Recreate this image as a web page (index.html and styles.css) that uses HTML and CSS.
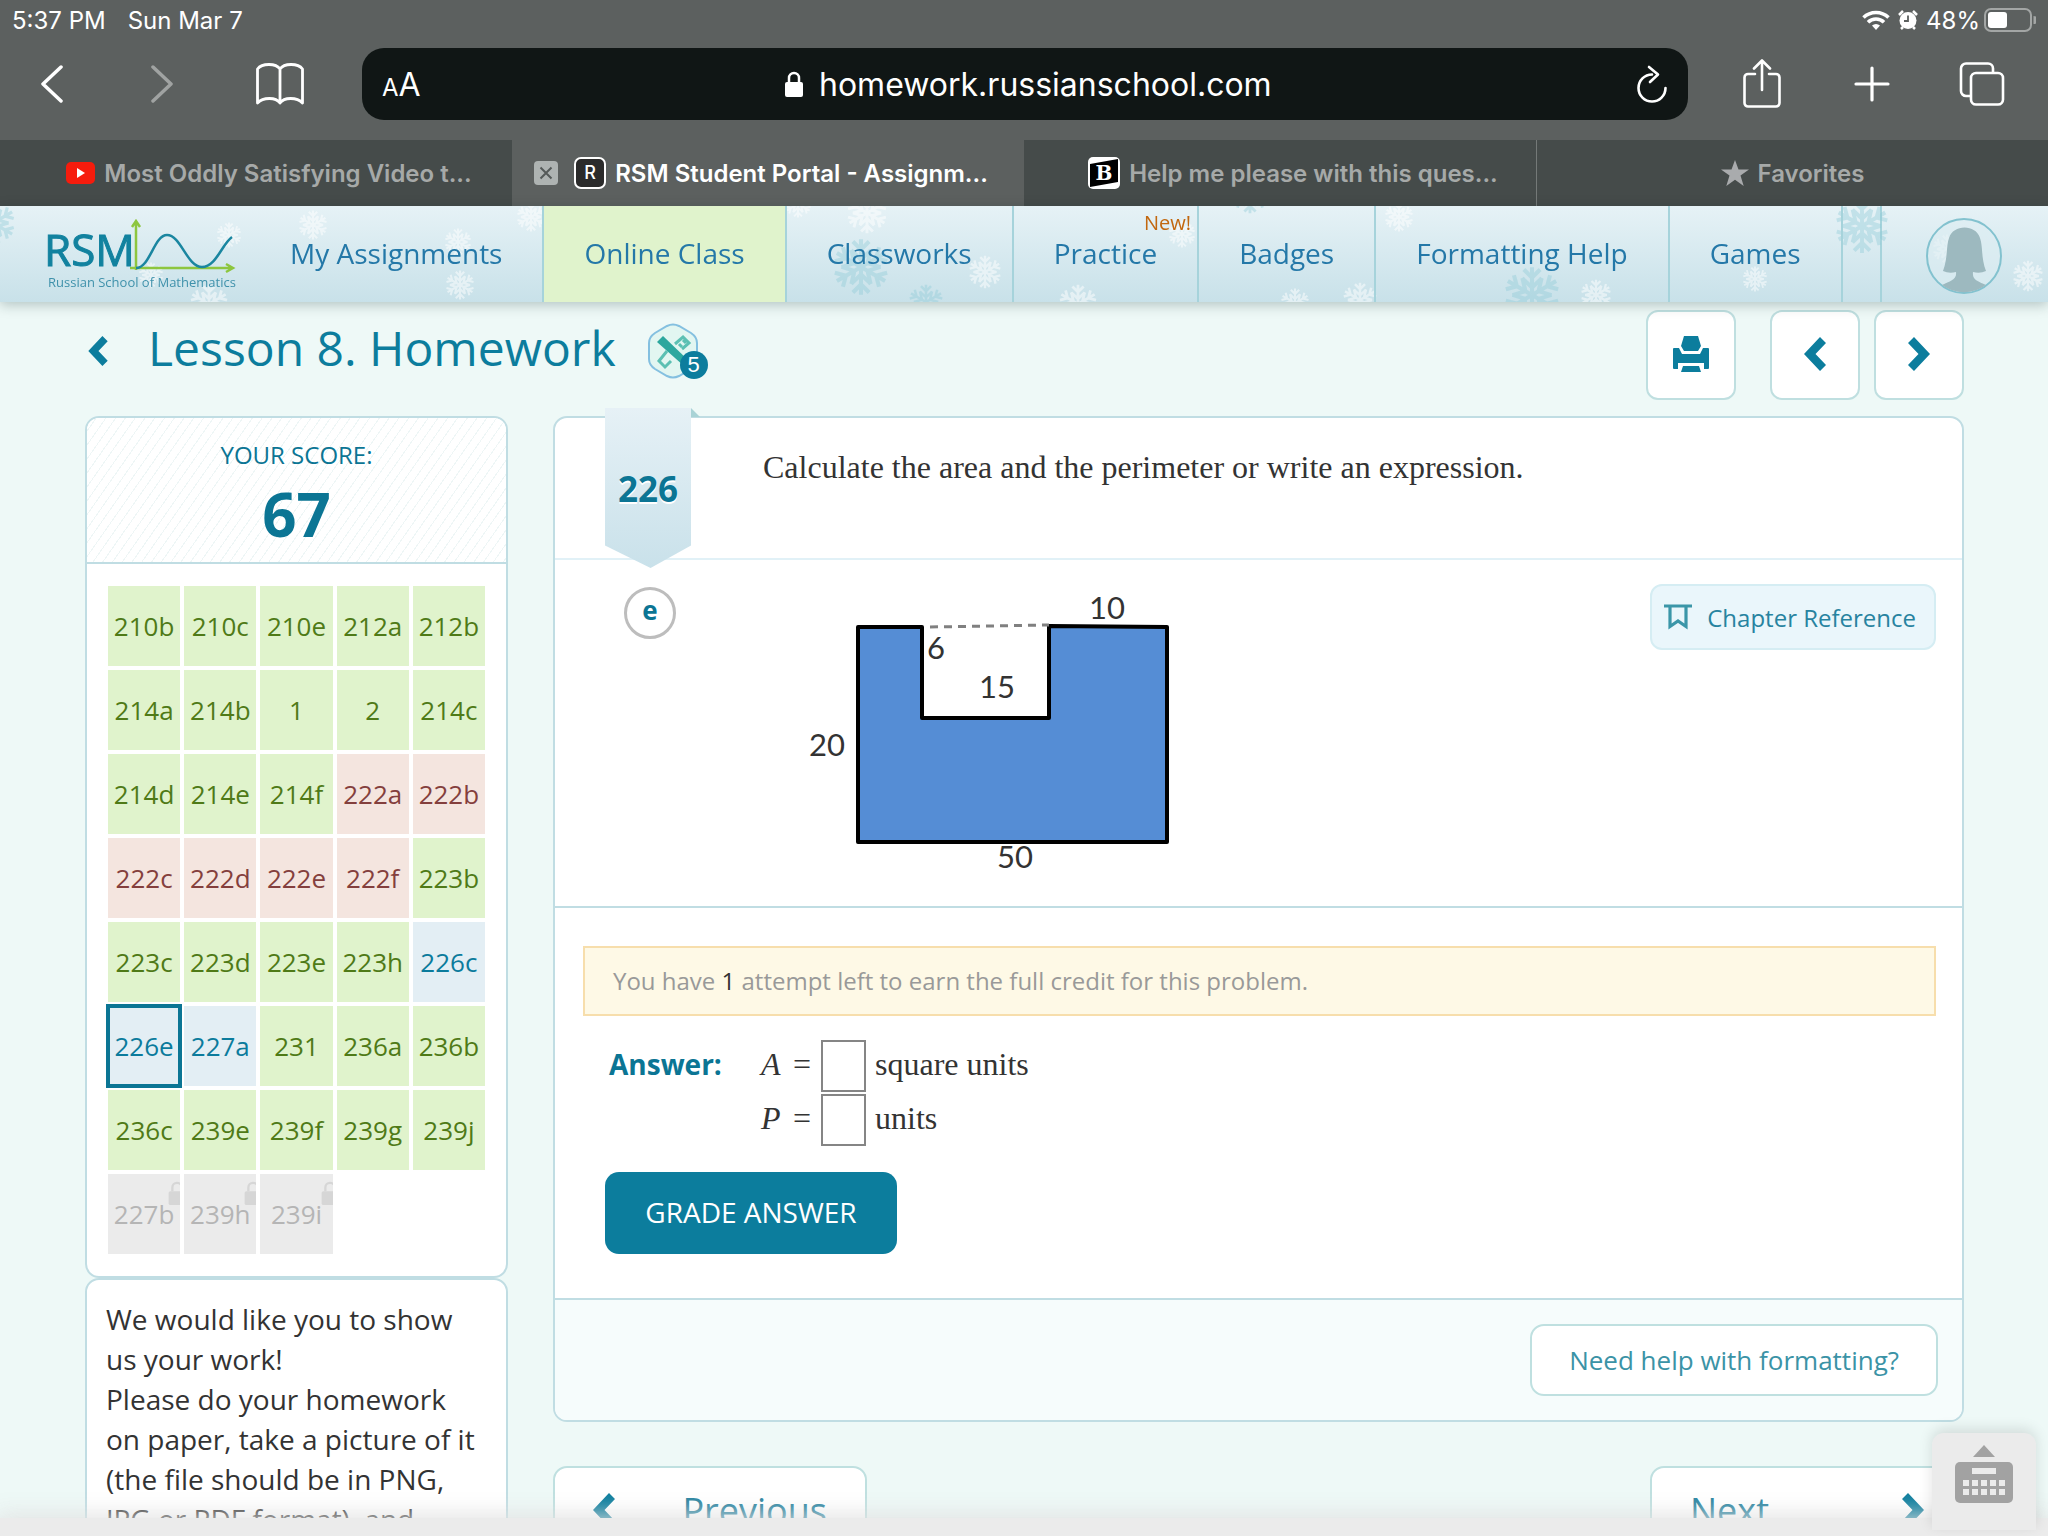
FILE: index.html
```html
<!DOCTYPE html>
<html lang="en">
<head>
    <meta charset="UTF-8">
    <meta name="viewport" content="width=device-width, initial-scale=1.0">

    <title>RSM Student Portal - Assignments</title>

<link rel="stylesheet" href="styles.css">

</head>
<body>
    <!-- shared shapes -->
    <svg class="defs" width="0" height="0" aria-hidden="true">
        <symbol id="flake" viewBox="-50 -50 100 100">
            <g id="arm" fill="none" stroke="currentColor" stroke-width="7">
                <path d="M0 0V-48M-14 -44L0 -30L14 -44M-17 -29L0 -13L17 -29"/>
            </g>
            <use href="#arm" transform="rotate(60)"/>
            <use href="#arm" transform="rotate(120)"/>
            <use href="#arm" transform="rotate(180)"/>
            <use href="#arm" transform="rotate(240)"/>
            <use href="#arm" transform="rotate(300)"/>
        </symbol>
        <symbol id="chev-left" viewBox="0 0 22 34">
            <path d="M16 0L22 6L11.500 17L22 28L16 34L0 17Z" fill="currentColor"/>
        </symbol>
        <symbol id="chev-right" viewBox="0 0 22 34">
            <path d="M6 0L0 6L10.500 17L0 28L6 34L22 17Z" fill="currentColor"/>
        </symbol>
        <symbol id="lock" viewBox="0 0 18 28">
            <path d="M4 12V8a5 5 0 0 1 10 0v4" fill="none" stroke="currentColor" stroke-width="2.500"/>
            <rect y="12" width="18" height="15" rx="2" fill="currentColor"/>
        </symbol>
    </svg>

    <div class="browser">
        <div class="status">
            <span>5:37 PM</span>
            <span>Sun Mar 7</span>
            <div class="status-right">
                <svg width="28" height="20" viewBox="0 0 28 20">
                    <g fill="none" stroke="#fff" stroke-width="3.600">
                        <path d="M1.500 7.500a18 18 0 0 1 25 0"/>
                        <path d="M6 12.300a11.500 11.500 0 0 1 16 0"/>
                    </g>
                    <path d="M14 20l-4-4.500a6 6 0 0 1 8 0z" fill="#fff"/>
                </svg>
                <svg width="20" height="20" viewBox="0 0 20 20">
                    <circle cx="10" cy="10.500" r="8.500" fill="#fff"/>
                    <path d="M1 5l4-4M19 5l-4-4M3 19l2-2M17 19l-2-2" stroke="#fff" stroke-width="2.500"/>
                    <path d="M10 5.500v5.500H6" fill="none" stroke="#5c605f" stroke-width="1.800"/>
                </svg>
                <span>48%</span>
                <svg class="battery" width="52" height="24" viewBox="0 0 52 24">
                    <rect x="1" y="1" width="46" height="22" rx="6" fill="none" stroke="#a3a6a5" stroke-width="2"/>
                    <rect x="4" y="4" width="19" height="16" rx="3" fill="#fff"/>
                    <path d="M49.500 8a4 4 0 0 1 0 8z" fill="#a3a6a5"/>
                </svg>
            </div>
        </div>

        <div class="toolbar">
            <button class="tool" aria-label="Back">
                <svg width="24" height="38" viewBox="0 0 24 38"><path d="M21 2L3 19L21 36" fill="none" stroke="#fff" stroke-width="3.500" stroke-linecap="round" stroke-linejoin="round"/></svg>
            </button>
            <button class="tool" aria-label="Forward">
                <svg width="24" height="38" viewBox="0 0 24 38"><path d="M3 2L21 19L3 36" fill="none" stroke="#a0a3a2" stroke-width="3.500" stroke-linecap="round" stroke-linejoin="round"/></svg>
            </button>
            <button class="tool wide" aria-label="Bookmarks">
                <svg width="48" height="42" viewBox="0 0 48 42"><path d="M24 6C20 0 6 0 1.500 6V40C7 34 20 34 24 40C28 34 41 34 46.500 40V6C42 0 28 0 24 6V40" fill="none" stroke="#fff" stroke-width="2.800" stroke-linejoin="round"/></svg>
            </button>
            <div class="address">
                <span class="reader"><small>A</small>A</span>
                <span class="url">
                    <svg width="18" height="28"><use href="#lock"/></svg>
                    homework.russianschool.com
                </span>
                <button class="reload" aria-label="Reload">
                    <svg width="32" height="38" viewBox="0 0 32 38"><path d="M16 9.500A13.500 13.500 0 1 0 29.500 23M13 2L22 9.500L14 17" fill="none" stroke="#fff" stroke-width="2.600" stroke-linecap="round" stroke-linejoin="round"/></svg>
                </button>
            </div>
            <button class="tool" aria-label="Share">
                <svg width="38" height="50" viewBox="0 0 38 50"><path d="M12 15H5a3.500 3.500 0 0 0-3.500 3.500V44A3.500 3.500 0 0 0 5 47.500H33a3.500 3.500 0 0 0 3.500-3.500V18.500A3.500 3.500 0 0 0 33 15H26M19 31V2M11 9.500L19 1.500L27 9.500" fill="none" stroke="#fff" stroke-width="2.600" stroke-linecap="round" stroke-linejoin="round"/></svg>
            </button>
            <button class="tool" aria-label="New tab">
                <svg width="36" height="36" viewBox="0 0 36 36"><path d="M18 2V34M2 18H34" stroke="#fff" stroke-width="3.200" stroke-linecap="round"/></svg>
            </button>
            <button class="tool" aria-label="All tabs">
                <svg width="46" height="44" viewBox="0 0 46 44"><rect x="12" y="11" width="32" height="31.500" rx="5" fill="none" stroke="#fff" stroke-width="2.600"/><path d="M12 34H7a5 5 0 0 1-5-5V6.500a5 5 0 0 1 5-5H29a5 5 0 0 1 5 5V11" fill="none" stroke="#fff" stroke-width="2.600"/></svg>
            </button>
        </div>

        <div class="tabs">
            <div class="tab">
                <span class="close"></span>
                <span class="label">
                    <svg width="29" height="22" viewBox="0 0 29 22"><rect width="29" height="22" rx="5" fill="#f61c0d"/><path d="M11 6L19 11L11 16Z" fill="#fff"/></svg>
                    Most Oddly Satisfying Video t...
                </span>
            </div>
            <div class="tab active">
                <button class="close" aria-label="Close tab">
                    <svg width="24" height="24" viewBox="0 0 24 24"><rect width="24" height="24" rx="4" fill="#aeb3b2"/><path d="M6.500 6.500L17.500 17.500M17.500 6.500L6.500 17.500" stroke="#555a59" stroke-width="2"/></svg>
                </button>
                <span class="label"><b class="fav">R</b>RSM Student Portal - Assignm...</span>
            </div>
            <div class="tab">
                <span class="close"></span>
                <span class="label">
                    <svg width="32" height="32" viewBox="0 0 32 32"><rect width="32" height="32" rx="5" fill="#fff"/><path d="M2 7L30 2V25L2 30Z" fill="#000"/><text x="16" y="23" class="brainly">B</text></svg>
                    Help me please with this ques...
                </span>
            </div>
            <div class="tab last">
                <span class="label">
                    <svg width="28" height="26" viewBox="0 0 28 26"><path d="M14 0L17.500 9.500H28L19.500 15.500L22.700 26L14 19.700L5.300 26L8.500 15.500L0 9.500H10.500Z" fill="#a9abad"/></svg>
                    Favorites
                </span>
            </div>
        </div>
    </div>

    <nav class="site-nav">
        <svg class="snow" aria-hidden="true">
            <g color="#fff" opacity="0.500">
                <use href="#flake" x="298" y="4" width="30" height="30"/>
                <use href="#flake" x="216" y="16" width="26" height="26"/>
                <use href="#flake" x="444" y="22" width="28" height="28"/>
                <use href="#flake" x="445" y="64" width="30" height="30"/>
                <use href="#flake" x="516" y="-4" width="30" height="30"/>
                <use href="#flake" x="189" y="78" width="40" height="40"/>
                <use href="#flake" x="138" y="56" width="26" height="26"/>
                <use href="#flake" x="846" y="-14" width="42" height="42"/>
                <use href="#flake" x="968" y="49" width="34" height="34"/>
                <use href="#flake" x="784" y="-16" width="28" height="28"/>
                <use href="#flake" x="1168" y="14" width="28" height="28"/>
                <use href="#flake" x="1058" y="78" width="40" height="40"/>
                <use href="#flake" x="1280" y="82" width="30" height="30"/>
                <use href="#flake" x="1342" y="76" width="36" height="36"/>
                <use href="#flake" x="1384" y="-4" width="30" height="30"/>
                <use href="#flake" x="1580" y="73" width="32" height="32"/>
                <use href="#flake" x="1742" y="60" width="26" height="26"/>
                <use href="#flake" x="1932" y="28" width="30" height="30"/>
                <use href="#flake" x="2012" y="54" width="32" height="32"/>
            </g>
            <g color="#8fcbd8" opacity="0.400">
                <use href="#flake" x="-30" y="-6" width="46" height="46"/>
                <use href="#flake" x="832" y="32" width="58" height="58"/>
                <use href="#flake" x="908" y="78" width="36" height="36"/>
                <use href="#flake" x="1230" y="-32" width="40" height="40"/>
                <use href="#flake" x="1503" y="60" width="58" height="58"/>
                <use href="#flake" x="1834" y="-8" width="56" height="56"/>
            </g>
        </svg>
        <a class="logo" href="#" aria-label="Russian School of Mathematics">
            <svg width="192" height="76" viewBox="0 0 192 76">
                <g fill="none" stroke="#8dc63f" stroke-width="2.500">
                    <path d="M92 52V3M88 9L92 3L96 9M86 50H188M182 46L189 50L182 54"/>
                </g>
                <path d="M92 50C106 50 110 17 123 17C137 17 143 49 158 49C172 49 178 26 188 19" fill="none" stroke="#1a86a0" stroke-width="2.500"/>
                <text x="0" y="48" class="logo-name">RSM</text>
                <text x="4" y="69" class="logo-sub">Russian School of Mathematics</text>
            </svg>
        </a>
        <a class="nav-item" href="#">My Assignments</a>
        <a class="nav-item current" href="#">Online Class</a>
        <a class="nav-item" href="#">Classworks</a>
        <a class="nav-item" href="#">Practice<span class="new">New!</span></a>
        <a class="nav-item" href="#">Badges</a>
        <a class="nav-item" href="#">Formatting Help</a>
        <a class="nav-item" href="#">Games</a>
        <span class="nav-spacer"></span>
        <a class="avatar" href="#" aria-label="Profile">
            <svg width="76" height="76" viewBox="0 0 76 76">
                <circle cx="38" cy="38" r="37" fill="#dcedf2" fill-opacity="0.600" stroke="#83c2cf" stroke-width="2"/>
                <path d="M17 53C22 40 20 28 23 20C27 6 50 6 54 20C57 28 55 40 60 53Q54 56 47 54C46 62 52 63 60 67A37 37 0 0 1 16 67C24 63 31 62 30 54Q23 56 17 53Z" fill="#9db9bf"/>
            </svg>
        </a>
    </nav>

    <div class="page">
        <header class="page-head">
            <div class="heading">
                <a href="#" class="back" aria-label="Back"><svg width="20" height="30"><use href="#chev-left"/></svg></a>
                <h1>Lesson 8. Homework</h1>
                <span class="award">
                    <svg width="50" height="56" viewBox="0 0 50 56">
                        <path d="M19 3Q25 0 31 3L43 10Q49 14 49 20V36Q49 42 43 46L31 53Q25 56 19 53L7 46Q1 42 1 36V20Q1 14 7 10Z" fill="#e2f6f1" stroke="#84c0e0" stroke-width="2"/>
                        <g fill="none" stroke="#5cc0b3" stroke-width="3">
                            <path d="M27 21L35 14L41 20L34 26M19 28L11 38L17 44L23 38"/>
                            <path d="M31 21l3 3M35 17l3 3"/>
                        </g>
                        <path d="M9 19L15 13L41 38L36 43Z" fill="#2da79e"/>
                    </svg>
                    <b class="count">5</b>
                </span>
            </div>
            <div class="actions">
                <button class="square print" aria-label="Print">
                    <svg width="36" height="36" viewBox="0 0 36 36" fill="#0c7d9d"><path d="M11 0H25L28 10L25 15H11L8 10Z"/><path d="M0 13Q0 12 1 12H6L9 18H27L30 12H35Q36 12 36 13V32Q36 33 35 33H31V27H5V33H1Q0 33 0 32Z"/><path d="M10 30H26L28 36H8Z"/></svg>
                </button>
                <button class="square" aria-label="Previous problem"><svg width="22" height="34"><use href="#chev-left"/></svg></button>
                <button class="square" aria-label="Next problem"><svg width="22" height="34"><use href="#chev-right"/></svg></button>
            </div>
        </header>

        <div class="columns">
            <aside>
                <section class="card">
                    <div class="score">
                        <p>YOUR SCORE:</p>
                        <strong>67</strong>
                    </div>
                    <div class="problems">
                        <a href="#">210b</a>
                        <a href="#">210c</a>
                        <a href="#">210e</a>
                        <a href="#">212a</a>
                        <a href="#">212b</a>
                        <a href="#">214a</a>
                        <a href="#">214b</a>
                        <a href="#">1</a>
                        <a href="#">2</a>
                        <a href="#">214c</a>
                        <a href="#">214d</a>
                        <a href="#">214e</a>
                        <a href="#">214f</a>
                        <a href="#" class="wrong">222a</a>
                        <a href="#" class="wrong">222b</a>
                        <a href="#" class="wrong">222c</a>
                        <a href="#" class="wrong">222d</a>
                        <a href="#" class="wrong">222e</a>
                        <a href="#" class="wrong">222f</a>
                        <a href="#">223b</a>
                        <a href="#">223c</a>
                        <a href="#">223d</a>
                        <a href="#">223e</a>
                        <a href="#">223h</a>
                        <a href="#" class="open">226c</a>
                        <a href="#" class="open selected">226e</a>
                        <a href="#" class="open">227a</a>
                        <a href="#">231</a>
                        <a href="#">236a</a>
                        <a href="#">236b</a>
                        <a href="#">236c</a>
                        <a href="#">239e</a>
                        <a href="#">239f</a>
                        <a href="#">239g</a>
                        <a href="#">239j</a>
                        <span class="locked"><svg width="18" height="26"><use href="#lock"/></svg>227b</span>
                        <span class="locked"><svg width="18" height="26"><use href="#lock"/></svg>239h</span>
                        <span class="locked"><svg width="18" height="26"><use href="#lock"/></svg>239i</span>
                    </div>
                </section>
                <section class="card upload">
                    <p>We would like you to show us your work!</p>
                    <p>Please do your homework on paper, take a picture of it (the file should be in PNG, JPG or PDF format), and</p>
                </section>
            </aside>

            <main>
                <section class="card">
                    <div class="task">
                        <span class="ribbon">226</span>
                        <span class="fold"></span>
                        <p>Calculate the area and the perimeter or write an expression.</p>
                    </div>
                    <div class="question">
                        <span class="letter">e</span>
                        <svg class="figure" width="380" height="296" viewBox="800 584 380 296">
                            <path d="M858 627H922V718H1049V626L1167 627V842H858Z" fill="#558dd5" stroke="#000" stroke-width="4" stroke-linejoin="round"/>
                            <path d="M930 627L1049 625" stroke="#808080" stroke-width="3" stroke-dasharray="8 6"/>
                            <text x="1089" y="619">10</text>
                            <text x="927" y="659">6</text>
                            <text x="979" y="698">15</text>
                            <text x="809" y="756">20</text>
                            <text x="997" y="868">50</text>
                        </svg>
                        <button class="chapter">
                            <svg width="28" height="26" viewBox="0 0 28 26"><path d="M0 2H28M6 2V22.500L14 17L22 22.500V2" fill="none" stroke="#3b96a8" stroke-width="3.200"/></svg>
                            Chapter Reference
                        </button>
                    </div>
                    <form class="answer">
                        <p class="notice">You have <b>1</b> attempt left to earn the full credit for this problem.</p>
                        <div class="fields">
                            <strong>Answer:</strong>
                            <div>
                                <div class="row">
                                    <label for="area"><i>A</i> =</label>
                                    <input type="text" id="area">
                                    <span>square units</span>
                                </div>
                                <div class="row">
                                    <label for="perimeter"><i>P</i> =</label>
                                    <input type="text" id="perimeter">
                                    <span>units</span>
                                </div>
                            </div>
                        </div>
                        <button type="button" class="grade">GRADE ANSWER</button>
                    </form>
                    <div class="card-foot">
                        <button class="help">Need help with formatting?</button>
                    </div>
                </section>
                <div class="pager">
                    <button><svg width="22" height="34"><use href="#chev-left"/></svg>Previous</button>
                    <button>Next<svg width="22" height="34"><use href="#chev-right"/></svg></button>
                </div>
            </main>
        </div>
    </div>

    <div class="bottom-bar"></div>
    <button class="keyboard" aria-label="Show keyboard">
        <svg width="58" height="72" viewBox="0 0 58 72" fill="#a2a2a2">
            <path d="M29 0L40 12H18Z"/>
            <rect y="17" width="58" height="41" rx="5"/>
            <path d="M17 26H41M8 38H14M17 38H23M26 38H32M35 38H41M44 38H50M8 47H14M17 47H23M26 47H32M35 47H41M44 47H50" stroke="#ebebeb" stroke-width="6"/>
        </svg>
    </button>
</body>
</html>
```
FILE: styles.css
```css
* {
    box-sizing: border-box;
}

body {
    margin: 0;
    height: 100vh;
    overflow: hidden;
    background-color: #eef9f7;
    font-family: "Open Sans", sans-serif;
    font-size: 26px;
    color: #333;
}

h1, p {
    margin: 0;
    font-weight: normal;
}

a {
    text-decoration: none;
    color: inherit;
}

button {
    font: inherit;
    color: inherit;
    padding: 0;
    border: none;
    background: none;
    cursor: pointer;
}

svg {
    display: block;
    flex: none;
}

.defs {
    position: absolute;
}

/* browser bars */
.browser {
    background-color: #5c605f;
    color: #fff;
    font-family: Inter, sans-serif;
}

.status {
    display: flex;
    align-items: center;
    gap: 22px;
    height: 40px;
    padding: 0 12px;
    font-size: 24px;
}

.status-right {
    display: flex;
    align-items: center;
    gap: 8px;
    margin-left: auto;
}

.battery {
    margin-left: -4px;
}

.toolbar {
    display: flex;
    align-items: center;
    gap: 62px;
    height: 100px;
    padding: 0 42px 12px 28px;
}

.tool {
    display: flex;
    justify-content: center;
    align-items: center;
    width: 48px;
    height: 60px;
}

.tool.wide {
    width: 64px;
}

.address {
    display: flex;
    flex: 1;
    justify-content: space-between;
    align-items: center;
    height: 72px;
    margin: 0 -12px;
    padding: 0 20px;
    border-radius: 22px;
    background-color: #101615;
    font-size: 32px;
}

.reader small {
    font-size: 24px;
}

.url {
    display: flex;
    align-items: center;
    gap: 16px;
}

.tabs {
    display: grid;
    grid-template-columns: repeat(4, 1fr);
    height: 66px;
    background-color: #454b4a;
    color: #a6a9a8;
    font-size: 24px;
    font-weight: 600;
}

.tab {
    display: flex;
    align-items: center;
    padding: 0 20px 0 22px;
    white-space: nowrap;
}

.tab.active {
    background-color: #5c605f;
    color: #fff;
}

.tab.last {
    padding: 0;
    border-left: 1px solid #747978;
}

.close {
    width: 24px;
}

.label {
    display: flex;
    flex: 1;
    justify-content: center;
    align-items: center;
    gap: 9px;
}

.fav {
    width: 32px;
    height: 32px;
    border: 2px solid #fff;
    border-radius: 7px;
    background-color: #2b2b2b;
    font-size: 18px;
    font-weight: 500;
    line-height: 28px;
    text-align: center;
}

.brainly {
    font: bold 20px "DejaVu Serif", serif;
    fill: #fff;
    text-anchor: middle;
}

/* site menu */
.site-nav {
    position: relative;
    display: flex;
    height: 96px;
    background: linear-gradient(#e6f2f6, #c8e1e9);
    box-shadow: 0 3px 12px rgba(0, 40, 40, 0.25);
    color: #2478a8;
    font-size: 28px;
}

.snow {
    position: absolute;
    top: 0;
    left: 0;
    width: 100%;
    height: 100%;
    overflow: hidden;
}

.logo {
    position: relative;
    width: 250px;
    padding: 12px 0 0 44px;
}

.logo-name {
    font: 44px "Open Sans", sans-serif;
    fill: #12829f;
    stroke: #12829f;
    stroke-width: 1;
}

.logo-sub {
    font: 13px "Open Sans", sans-serif;
    fill: #3f91ab;
}

.nav-item {
    position: relative;
    padding: 0 40px;
    border-right: 2px solid #a6d3db;
    line-height: 94px;
    white-space: nowrap;
}

.nav-item.current {
    background-color: #e0f3cc;
}

.new {
    position: absolute;
    top: 2px;
    right: 6px;
    color: #c2680f;
    font-size: 20px;
    line-height: 30px;
}

.nav-spacer {
    width: 39px;
    border-right: 2px solid #a6d3db;
}

.avatar {
    position: relative;
    margin: 12px 46px 0 auto;
}

/* page */
.page {
    padding: 8px 84px 0 85px;
}

.page-head {
    display: flex;
    justify-content: space-between;
    margin-bottom: 16px;
    color: #0c7d9d;
}

.heading {
    display: flex;
    align-items: center;
    height: 82px;
    padding-left: 3px;
}

h1 {
    margin: 0 32px 6px 40px;
    font-size: 48px;
    line-height: 72px;
}

.award {
    position: relative;
}

.count {
    position: absolute;
    right: -10px;
    bottom: 0;
    width: 28px;
    height: 28px;
    border-radius: 50%;
    background-color: #0c7d9d;
    color: #fff;
    font-family: "Liberation Sans", sans-serif;
    font-size: 22px;
    font-weight: normal;
    line-height: 28px;
    text-align: center;
}

.actions {
    display: flex;
    gap: 14px;
}

.square {
    display: flex;
    justify-content: center;
    align-items: center;
    width: 90px;
    height: 90px;
    padding-bottom: 3px;
    border: 2px solid #bfdfe0;
    border-radius: 12px;
    background-color: #fff;
}

.print {
    margin-right: 20px;
}

.columns {
    display: grid;
    grid-template-columns: 423px 1fr;
    gap: 45px;
}

.card {
    border: 2px solid #c0dde3;
    border-radius: 14px;
    background-color: #fff;
}

.score {
    height: 146px;
    padding-top: 17px;
    border-bottom: 2px solid #c0dde3;
    border-radius: 12px 12px 0 0;
    background: repeating-linear-gradient(125deg, #fff 0 7px, #eef6f6 7px 8px);
    color: #0b7594;
    font-size: 24px;
    line-height: 40px;
    text-align: center;
}

.score strong {
    font-size: 60px;
    line-height: 78px;
}

.problems {
    display: grid;
    grid-template-columns: repeat(5, 1fr);
    gap: 4px;
    padding: 22px 21px;
}

.problems > * {
    position: relative;
    height: 80px;
    overflow: hidden;
    background-color: #e0f3cc;
    color: #4f7a17;
    line-height: 80px;
    text-align: center;
}

.problems .wrong {
    background-color: #f4e5df;
    color: #843f3d;
}

.problems .open {
    background-color: #e3eef4;
    color: #0b7b9c;
}

.problems .selected {
    outline: 4px solid #0b7594;
    outline-offset: -2px;
}

.problems .locked {
    background-color: #ebebeb;
    color: #b5b5b5;
}

.locked svg {
    position: absolute;
    top: 6px;
    right: -6px;
    color: #d6d6d6;
}

.upload {
    padding: 19px 26px 20px 19px;
    font-size: 28px;
    line-height: 40px;
}

.task {
    position: relative;
    height: 142px;
    padding: 27px 28px 0 208px;
    border-bottom: 2px solid #e1f1f7;
    font-family: "Liberation Serif", serif;
    font-size: 32px;
    line-height: 44px;
}

/* bookmark hanging over the top edge of the card */
.ribbon {
    position: absolute;
    top: -10px;
    left: 50px;
    width: 86px;
    height: 160px;
    background: linear-gradient(#e6f1f6, #c9e1ea);
    clip-path: polygon(0 0, 100% 0, 100% 86%, 53% 100%, 0 86%);
    color: #0b7594;
    font-family: "Open Sans", sans-serif;
    font-size: 35px;
    font-weight: bold;
    line-height: 162px;
    text-align: center;
    text-shadow: 0 2px #fff;
}

.fold {
    position: absolute;
    top: -10px;
    left: 136px;
    border-right: 9px solid transparent;
    border-bottom: 9px solid #a9d3d6;
}

.question {
    display: flex;
    align-items: flex-start;
    padding: 24px 26px 26px 69px;
    border-bottom: 2px solid #c0dde3;
}

.letter {
    width: 52px;
    height: 52px;
    margin-top: 3px;
    border: 3px solid #bdbdbd;
    border-radius: 50%;
    color: #0b7594;
    font-weight: bold;
    line-height: 41px;
    text-align: center;
}

.figure {
    margin: 0 auto 0 124px;
    font-family: Lato, sans-serif;
    font-size: 31px;
    fill: #333;
}

.chapter {
    display: flex;
    align-items: center;
    gap: 15px;
    height: 66px;
    padding: 0 18px 0 12px;
    border: 2px solid #d5edf3;
    border-radius: 12px;
    background-color: #eaf6fb;
    color: #2783a0;
    font-size: 24px;
}

.answer {
    padding: 38px 26px 44px 28px;
}

.notice {
    padding: 0 28px;
    border: 2px solid #f7deac;
    background-color: #fef9e6;
    color: #999;
    font-size: 24px;
    line-height: 66px;
}

.notice b {
    color: #333;
    font-weight: normal;
}

.fields {
    display: flex;
    margin: 24px 0 26px;
    padding-left: 26px;
}

.fields strong {
    width: 152px;
    color: #0b7594;
    font-size: 28px;
    line-height: 48px;
}

.row {
    display: flex;
    font-family: "Liberation Serif", serif;
    font-size: 32px;
    line-height: 48px;
}

.row + .row {
    margin-top: 2px;
}

.row label {
    display: flex;
    justify-content: space-between;
    width: 50px;
    margin-right: 10px;
}

.row input {
    width: 45px;
    height: 52px;
    margin-right: 9px;
    border: 2px solid #858585;
    border-radius: 0;
    background-color: #fff;
    font: inherit;
}

.grade {
    width: 292px;
    height: 82px;
    margin-left: 22px;
    padding-bottom: 3px;
    border-radius: 14px;
    background-color: #0c7d9d;
    color: #fff;
    font-size: 28px;
}

.card-foot {
    display: flex;
    justify-content: flex-end;
    padding: 24px;
    border-top: 2px solid #c0dde3;
    border-radius: 0 0 12px 12px;
    background-color: #f6fcfc;
}

.help {
    height: 72px;
    padding: 0 37px;
    border: 2px solid #bfe0e0;
    border-radius: 14px;
    background-color: #fff;
    color: #3b93a6;
}

.pager {
    display: flex;
    justify-content: space-between;
    margin-top: 44px;
    color: #2783a0;
    font-size: 36px;
}

.pager button {
    display: flex;
    justify-content: space-between;
    align-items: center;
    width: 314px;
    height: 88px;
    padding: 0 38px;
    border: 2px solid #bfe0e0;
    border-radius: 14px;
    background-color: #fff;
}

.pager svg {
    color: #0c7d9d;
}

.bottom-bar {
    position: fixed;
    bottom: 0;
    left: 0;
    width: 100%;
    height: 18px;
    background-color: #ebebeb;
    box-shadow: 0 0 22px 4px rgba(225, 225, 225, 0.9);
}

.keyboard {
    position: fixed;
    right: 12px;
    bottom: 6px;
    display: flex;
    justify-content: center;
    width: 104px;
    height: 97px;
    padding-top: 12px;
    border-radius: 12px 12px 0 0;
    background-color: #ebebeb;
    box-shadow: 0 -4px 14px rgba(0, 0, 0, 0.12);
}
```
